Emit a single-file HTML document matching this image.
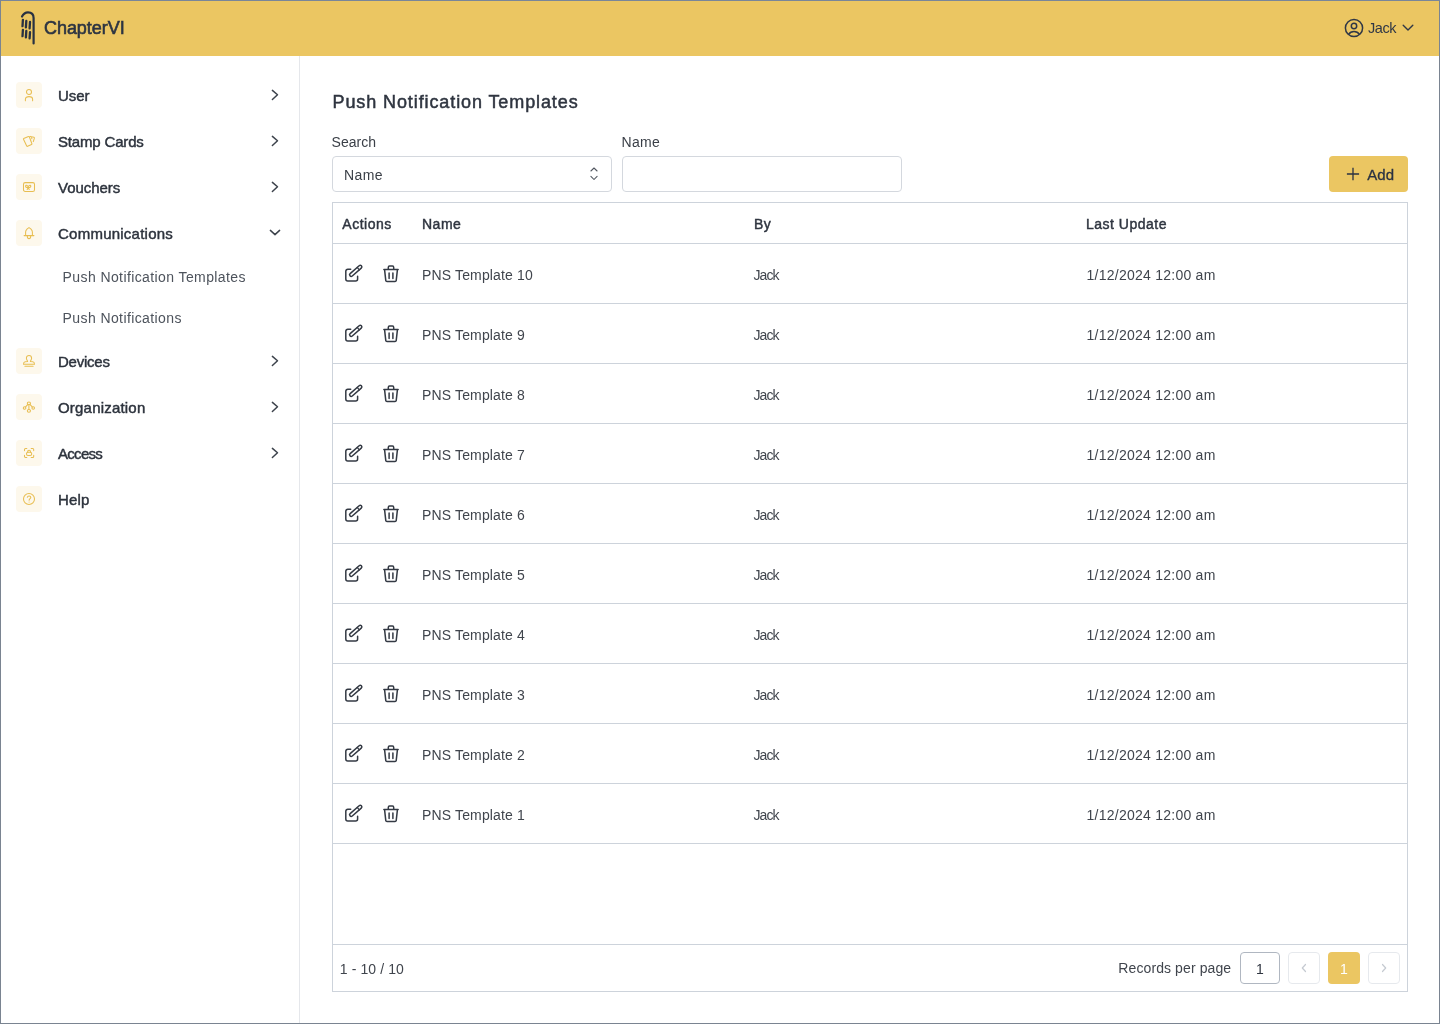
<!DOCTYPE html><html><head><meta charset="utf-8"><title>ChapterVI</title><style>
*{margin:0;padding:0;box-sizing:border-box}
html,body{width:1440px;height:1024px;overflow:hidden;background:#fff;font-family:"Liberation Sans",sans-serif}
#root{position:absolute;left:0;top:0;width:1440px;height:1024px;will-change:transform}
.t{position:absolute;white-space:nowrap}
.abs{position:absolute}
svg{position:absolute;overflow:visible}
</style></head><body><div id="root">
<div class="abs" style="left:0;top:0;width:1440px;height:1024px;border:1px solid #7A8491;border-top-color:#798699;z-index:50;pointer-events:none"></div>
<div class="abs" style="left:0;top:0;width:1440px;height:56px;background:#EBC662"></div>
<svg style="left:0;top:0" width="60" height="56" viewBox="0 0 60 56" fill="none" stroke="#283142" stroke-linecap="round">
<path d="M22 16.5 C23.5 13.5 25.5 12.3 28 12.3 C31.5 12.3 33.6 14.5 33.6 18 L33.6 43.5" stroke-width="2.2"/>
<path d="M22.9 19.8 L22.5 26.2 M22.9 29.8 L22.5 36.2 M26.3 21 L25.9 27.4 M26.3 31 L25.9 37.4 M30.0 22 L29.6 28.4 M30.0 32.2 L29.6 38.4" stroke-width="2.3"/>
</svg>
<div class="t" style="left:44px;top:19.46px;font-size:18px;line-height:18px;font-weight:400;color:#2C3442;letter-spacing:-0.05px;-webkit-text-stroke:0.6px #2C3442;">ChapterVI</div>
<svg style="left:1344px;top:18px" width="20" height="20" viewBox="0 0 20 20" fill="none" stroke="#2F3746" stroke-width="1.5">
<circle cx="10" cy="10" r="8.6"/><circle cx="10" cy="8" r="2.7"/><path d="M4.6 16.3 C5.8 14.4 7.6 13.4 10 13.4 C12.4 13.4 14.2 14.4 15.4 16.3"/>
</svg>
<div class="t" style="left:1368px;top:21.48px;font-size:14.5px;line-height:14.5px;font-weight:400;color:#2F3746;letter-spacing:-0.4px;">Jack</div>
<svg style="left:1400px;top:20px" width="16" height="16" viewBox="0 0 16 16" fill="none" stroke="#2F3746" stroke-width="1.4" stroke-linecap="round" stroke-linejoin="round">
<path d="M3.2 5.2 L8 9.9 L12.8 5.2"/></svg>
<div class="abs" style="left:299px;top:56px;width:1px;height:968px;background:#E5E7EB"></div>
<div class="abs" style="left:16px;top:82px;width:26px;height:26px;border-radius:4px;background:#FDF8EC"></div>
<svg style="left:23px;top:89px" width="12" height="12" viewBox="0 0 12 12" fill="none" stroke="#E8BE52" stroke-width="1.05" stroke-linecap="round" stroke-linejoin="round"><circle cx="6" cy="2.9" r="2.5"/><path d="M2.4 11.8 L2.4 10.2 C2.4 8.5 4 7.6 6 7.6 C8 7.6 9.6 8.5 9.6 10.2 L9.6 11.8"/></svg>
<div class="t" style="left:58px;top:87.90px;font-size:15px;line-height:15px;font-weight:400;color:#2D333D;letter-spacing:-0.07px;-webkit-text-stroke:0.45px #2D333D;">User</div>
<svg style="left:267px;top:87px" width="16" height="16" viewBox="0 0 16 16" fill="none" stroke="#3D434C" stroke-width="1.5" stroke-linecap="round" stroke-linejoin="round"><path d="M5.4 3.4 L10.5 7.8 L5.4 12.5"/></svg>
<div class="abs" style="left:16px;top:128px;width:26px;height:26px;border-radius:4px;background:#FDF8EC"></div>
<svg style="left:23px;top:135px" width="12" height="12" viewBox="0 0 12 12" fill="none" stroke="#E8BE52" stroke-width="1.05" stroke-linecap="round" stroke-linejoin="round"><path d="M0.7 3.6 L5.5 1.6 C5.9 1.4 6.3 1.6 6.4 2 L8.9 8.7 C9 9.1 8.9 9.5 8.5 9.6 L4.6 11.3 C4.2 11.5 3.8 11.3 3.7 10.9 L0.5 4.3 C0.3 4 0.4 3.7 0.7 3.6 Z"/><path d="M7.2 1.4 L10.9 2.3 C11.3 2.4 11.5 2.8 11.4 3.2 L10.3 6.6"/><path d="M8.6 2.6 L8.9 3.8"/></svg>
<div class="t" style="left:58px;top:133.90px;font-size:15px;line-height:15px;font-weight:400;color:#2D333D;letter-spacing:-0.17px;-webkit-text-stroke:0.45px #2D333D;">Stamp Cards</div>
<svg style="left:267px;top:133px" width="16" height="16" viewBox="0 0 16 16" fill="none" stroke="#3D434C" stroke-width="1.5" stroke-linecap="round" stroke-linejoin="round"><path d="M5.4 3.4 L10.5 7.8 L5.4 12.5"/></svg>
<div class="abs" style="left:16px;top:174px;width:26px;height:26px;border-radius:4px;background:#FDF8EC"></div>
<svg style="left:23px;top:181px" width="12" height="12" viewBox="0 0 12 12" fill="none" stroke="#E8BE52" stroke-width="1.05" stroke-linecap="round" stroke-linejoin="round"><path d="M2.2 1.6 L9.8 1.6 C10.9 1.6 11.5 2.3 11.5 3.3 L11.5 8.7 C11.5 9.8 10.9 10.4 9.8 10.4 L2.2 10.4 C1.1 10.4 0.5 9.8 0.5 8.7 L0.5 3.3 C0.5 2.3 1.1 1.6 2.2 1.6 Z"/><path d="M2.6 5.2 C2.6 4.3 3.6 4 4.2 4.6 L5.2 5.6 L6.2 4.6 C6.8 4 7.8 4.3 7.8 5.2 C7.8 6.1 6.6 6.6 5.2 6.6 C3.8 6.6 2.6 6.1 2.6 5.2 Z M4.2 8.5 L5.2 6.6 L6.2 8.5" stroke-width="1.1"/></svg>
<div class="t" style="left:58px;top:179.90px;font-size:15px;line-height:15px;font-weight:400;color:#2D333D;letter-spacing:-0.03px;-webkit-text-stroke:0.45px #2D333D;">Vouchers</div>
<svg style="left:267px;top:179px" width="16" height="16" viewBox="0 0 16 16" fill="none" stroke="#3D434C" stroke-width="1.5" stroke-linecap="round" stroke-linejoin="round"><path d="M5.4 3.4 L10.5 7.8 L5.4 12.5"/></svg>
<div class="abs" style="left:16px;top:220px;width:26px;height:26px;border-radius:4px;background:#FDF8EC"></div>
<svg style="left:23px;top:227px" width="12" height="12" viewBox="0 0 12 12" fill="none" stroke="#E8BE52" stroke-width="1.05" stroke-linecap="round" stroke-linejoin="round"><path d="M2.6 8.4 L2.6 5 C2.6 3.6 3.3 2.8 4.2 1.9 L6 0.6 L7.8 1.9 C8.7 2.8 9.4 3.6 9.4 5 L9.4 8.4"/><path d="M1.1 8.6 L10.9 8.6"/><path d="M4.3 8.9 C4.3 10.7 5 11.6 6 11.6 C7 11.6 7.7 10.7 7.7 8.9"/></svg>
<div class="t" style="left:58px;top:225.90px;font-size:15px;line-height:15px;font-weight:400;color:#2D333D;letter-spacing:0.24px;-webkit-text-stroke:0.45px #2D333D;">Communications</div>
<svg style="left:267px;top:225px" width="16" height="16" viewBox="0 0 16 16" fill="none" stroke="#3D434C" stroke-width="1.5" stroke-linecap="round" stroke-linejoin="round"><path d="M3.4 5.4 L8 9.6 L12.6 5.4"/></svg>
<div class="abs" style="left:16px;top:348px;width:26px;height:26px;border-radius:4px;background:#FDF8EC"></div>
<svg style="left:23px;top:355px" width="12" height="12" viewBox="0 0 12 12" fill="none" stroke="#E8BE52" stroke-width="1.05" stroke-linecap="round" stroke-linejoin="round"><path d="M4.6 6.5 C4.5 5.4 3.4 4.9 3.4 3.3 C3.4 1.6 4.6 0.4 6 0.4 C7.4 0.4 8.6 1.6 8.6 3.3 C8.6 4.9 7.5 5.4 7.4 6.5 L9.9 6.7 C11.1 6.9 11.5 7.9 11.5 9.3 L0.5 9.3 C0.5 7.9 0.9 6.9 2.1 6.7 Z"/><path d="M1.9 11.2 L10.1 11.2"/></svg>
<div class="t" style="left:58px;top:353.90px;font-size:15px;line-height:15px;font-weight:400;color:#2D333D;letter-spacing:-0.23px;-webkit-text-stroke:0.45px #2D333D;">Devices</div>
<svg style="left:267px;top:353px" width="16" height="16" viewBox="0 0 16 16" fill="none" stroke="#3D434C" stroke-width="1.5" stroke-linecap="round" stroke-linejoin="round"><path d="M5.4 3.4 L10.5 7.8 L5.4 12.5"/></svg>
<div class="abs" style="left:16px;top:394px;width:26px;height:26px;border-radius:4px;background:#FDF8EC"></div>
<svg style="left:23px;top:401px" width="12" height="12" viewBox="0 0 12 12" fill="none" stroke="#E8BE52" stroke-width="1.05" stroke-linecap="round" stroke-linejoin="round"><ellipse cx="5.9" cy="2.3" rx="1.6" ry="1.4"/><ellipse cx="1.6" cy="7" rx="1.3" ry="1.3"/><ellipse cx="10.2" cy="7" rx="1.3" ry="1.3"/><ellipse cx="5.9" cy="9.8" rx="1.6" ry="1.4"/><path d="M4.9 3.4 L2.6 5.9 M6.9 3.4 L9.2 5.9 M5.9 3.7 L5.9 8.4"/></svg>
<div class="t" style="left:58px;top:399.90px;font-size:15px;line-height:15px;font-weight:400;color:#2D333D;letter-spacing:0.2px;-webkit-text-stroke:0.45px #2D333D;">Organization</div>
<svg style="left:267px;top:399px" width="16" height="16" viewBox="0 0 16 16" fill="none" stroke="#3D434C" stroke-width="1.5" stroke-linecap="round" stroke-linejoin="round"><path d="M5.4 3.4 L10.5 7.8 L5.4 12.5"/></svg>
<div class="abs" style="left:16px;top:440px;width:26px;height:26px;border-radius:4px;background:#FDF8EC"></div>
<svg style="left:23px;top:447px" width="12" height="12" viewBox="0 0 12 12" fill="none" stroke="#E8BE52" stroke-width="1.05" stroke-linecap="round" stroke-linejoin="round"><path d="M1.5 3.6 L1.5 2.5 C1.5 1.9 1.9 1.5 2.5 1.5 L3.8 1.5 M8.2 1.5 L9.7 1.5 C10.3 1.5 10.7 1.9 10.7 2.5 L10.7 3.6 M10.7 8.3 L10.7 9.4 C10.7 10 10.3 10.4 9.7 10.4 L8.2 10.4 M3.8 10.4 L2.5 10.4 C1.9 10.4 1.5 10 1.5 9.4 L1.5 8.3"/><rect x="3.5" y="5.3" width="5.2" height="3.1" rx="1.5"/><path d="M4.7 5.3 L4.7 4.6 C4.7 3.7 5.3 3.2 6.1 3.2 C6.9 3.2 7.5 3.7 7.5 4.6 L7.5 5.3"/></svg>
<div class="t" style="left:58px;top:445.90px;font-size:15px;line-height:15px;font-weight:400;color:#2D333D;letter-spacing:-0.7px;-webkit-text-stroke:0.45px #2D333D;">Access</div>
<svg style="left:267px;top:445px" width="16" height="16" viewBox="0 0 16 16" fill="none" stroke="#3D434C" stroke-width="1.5" stroke-linecap="round" stroke-linejoin="round"><path d="M5.4 3.4 L10.5 7.8 L5.4 12.5"/></svg>
<div class="abs" style="left:16px;top:486px;width:26px;height:26px;border-radius:4px;background:#FDF8EC"></div>
<svg style="left:23px;top:493px" width="12" height="12" viewBox="0 0 12 12" fill="none" stroke="#E8BE52" stroke-width="1.05" stroke-linecap="round" stroke-linejoin="round"><circle cx="6" cy="6" r="5.5"/><path d="M4.3 4.3 C4.5 3.3 5.2 2.9 6.1 2.9 C7.1 2.9 7.8 3.6 7.8 4.4 C7.8 5.6 6.1 5.7 6.1 7.3"/><path d="M6.1 8.9 L6.1 9"/></svg>
<div class="t" style="left:58px;top:491.90px;font-size:15px;line-height:15px;font-weight:400;color:#2D333D;letter-spacing:0.2px;-webkit-text-stroke:0.45px #2D333D;">Help</div>
<div class="t" style="left:62.6px;top:270.05px;font-size:14px;line-height:14px;font-weight:400;color:#4D535C;letter-spacing:0.4px;">Push Notification Templates</div>
<div class="t" style="left:62.6px;top:310.95px;font-size:14px;line-height:14px;font-weight:400;color:#4D535C;letter-spacing:0.4px;">Push Notifications</div>
<div class="t" style="left:332.5px;top:92.86px;font-size:18px;line-height:18px;font-weight:400;color:#2F3540;letter-spacing:0.9px;-webkit-text-stroke:0.5px #2F3540;">Push Notification Templates</div>
<div class="t" style="left:331.6px;top:134.75px;font-size:14px;line-height:14px;font-weight:400;color:#3A3F47;letter-spacing:0px;">Search</div>
<div class="t" style="left:621.6px;top:134.75px;font-size:14px;line-height:14px;font-weight:400;color:#3A3F47;letter-spacing:0.3px;">Name</div>
<div class="abs" style="left:332px;top:156px;width:280px;height:36px;border:1px solid #D4D8DE;border-radius:4px"></div>
<div class="t" style="left:344px;top:167.55px;font-size:14px;line-height:14px;font-weight:400;color:#3A3F47;letter-spacing:0.4px;">Name</div>
<svg style="left:586px;top:166px" width="16" height="16" viewBox="0 0 16 16" fill="none" stroke="#50565F" stroke-width="1.05" stroke-linecap="round" stroke-linejoin="round"><path d="M4.9 5 L8 2 L11.1 5 M4.9 10.3 L8 13.5 L11.1 10.3"/></svg>
<div class="abs" style="left:622px;top:156px;width:280px;height:36px;border:1px solid #D4D8DE;border-radius:4px"></div>
<div class="abs" style="left:1329px;top:156px;width:79px;height:36px;background:#EBC662;border-radius:4px"></div>
<svg style="left:1345px;top:166px" width="16" height="16" viewBox="0 0 16 16" fill="none" stroke="#2A3242" stroke-width="1.3"><path d="M8 1.8 L8 14.2 M1.9 8 L14.1 8"/></svg>
<div class="t" style="left:1367.2px;top:166.60px;font-size:15px;line-height:15px;font-weight:400;color:#2A3242;letter-spacing:0.1px;-webkit-text-stroke:0.3px #2A3242;">Add</div>
<div class="abs" style="left:332px;top:202px;width:1076px;height:790px;border:1px solid #CDD3DB"></div>
<div class="abs" style="left:333px;top:243px;width:1074px;height:1px;background:#CDD3DB"></div>
<div class="t" style="left:342.3px;top:216.75px;font-size:14px;line-height:14px;font-weight:400;color:#2F3540;letter-spacing:0.5px;-webkit-text-stroke:0.45px #2F3540;">Actions</div>
<div class="t" style="left:422px;top:216.75px;font-size:14px;line-height:14px;font-weight:400;color:#2F3540;letter-spacing:0.5px;-webkit-text-stroke:0.45px #2F3540;">Name</div>
<div class="t" style="left:754px;top:216.75px;font-size:14px;line-height:14px;font-weight:400;color:#2F3540;letter-spacing:0.5px;-webkit-text-stroke:0.45px #2F3540;">By</div>
<div class="t" style="left:1086px;top:216.75px;font-size:14px;line-height:14px;font-weight:400;color:#2F3540;letter-spacing:0.5px;-webkit-text-stroke:0.45px #2F3540;">Last Update</div>
<svg style="left:343px;top:264px" width="20" height="20" viewBox="0 0 20 20" fill="none" stroke="#343A44" stroke-width="1.5" stroke-linecap="round" stroke-linejoin="round"><path d="M7.7 5.3 L4.8 5.3 C3.6 5.3 2.8 6.1 2.8 7.3 L2.8 15.1 C2.8 16.3 3.6 17.1 4.8 17.1 L12.6 17.1 C13.8 17.1 14.6 16.3 14.6 15.1 L14.6 12.2"/><path d="M9.26 12.0 L18.26 4.1 A1.6 1.6 0 0 0 16.14 1.7 L7.14 9.6 A1.6 1.6 0 0 0 9.26 12.0 Z"/><path d="M16.31 5.82 L14.19 3.42" stroke-width="1.3"/></svg>
<svg style="left:381px;top:264px" width="20" height="20" viewBox="0 0 20 20" fill="none" stroke="#343A44" stroke-width="1.5" stroke-linecap="round" stroke-linejoin="round"><path d="M2.9 5.4 L17.1 5.4"/><path d="M7.3 5.2 L7.3 3.4 C7.3 2.5 7.8 2.1 8.5 2.1 L11.5 2.1 C12.2 2.1 12.7 2.5 12.7 3.4 L12.7 5.2"/><path d="M3.6 5.8 L4.8 16.6 C4.9 17.2 5.4 17.4 6 17.4 L14 17.4 C14.6 17.4 15.1 17.2 15.2 16.6 L16.4 5.8"/><path d="M8.1 8.9 L8.1 14.4 M11.9 8.9 L11.9 14.4"/></svg>
<div class="t" style="left:422px;top:267.65px;font-size:14px;line-height:14px;font-weight:400;color:#40454D;letter-spacing:0.15px;">PNS Template 10</div>
<div class="t" style="left:753.4px;top:267.65px;font-size:14px;line-height:14px;font-weight:400;color:#40454D;letter-spacing:-0.9px;">Jack</div>
<div class="t" style="left:1086.5px;top:267.65px;font-size:14px;line-height:14px;font-weight:400;color:#40454D;letter-spacing:0.25px;">1/12/2024 12:00 am</div>
<div class="abs" style="left:333px;top:303px;width:1074px;height:1px;background:#CDD3DB"></div>
<svg style="left:343px;top:324px" width="20" height="20" viewBox="0 0 20 20" fill="none" stroke="#343A44" stroke-width="1.5" stroke-linecap="round" stroke-linejoin="round"><path d="M7.7 5.3 L4.8 5.3 C3.6 5.3 2.8 6.1 2.8 7.3 L2.8 15.1 C2.8 16.3 3.6 17.1 4.8 17.1 L12.6 17.1 C13.8 17.1 14.6 16.3 14.6 15.1 L14.6 12.2"/><path d="M9.26 12.0 L18.26 4.1 A1.6 1.6 0 0 0 16.14 1.7 L7.14 9.6 A1.6 1.6 0 0 0 9.26 12.0 Z"/><path d="M16.31 5.82 L14.19 3.42" stroke-width="1.3"/></svg>
<svg style="left:381px;top:324px" width="20" height="20" viewBox="0 0 20 20" fill="none" stroke="#343A44" stroke-width="1.5" stroke-linecap="round" stroke-linejoin="round"><path d="M2.9 5.4 L17.1 5.4"/><path d="M7.3 5.2 L7.3 3.4 C7.3 2.5 7.8 2.1 8.5 2.1 L11.5 2.1 C12.2 2.1 12.7 2.5 12.7 3.4 L12.7 5.2"/><path d="M3.6 5.8 L4.8 16.6 C4.9 17.2 5.4 17.4 6 17.4 L14 17.4 C14.6 17.4 15.1 17.2 15.2 16.6 L16.4 5.8"/><path d="M8.1 8.9 L8.1 14.4 M11.9 8.9 L11.9 14.4"/></svg>
<div class="t" style="left:422px;top:327.65px;font-size:14px;line-height:14px;font-weight:400;color:#40454D;letter-spacing:0.15px;">PNS Template 9</div>
<div class="t" style="left:753.4px;top:327.65px;font-size:14px;line-height:14px;font-weight:400;color:#40454D;letter-spacing:-0.9px;">Jack</div>
<div class="t" style="left:1086.5px;top:327.65px;font-size:14px;line-height:14px;font-weight:400;color:#40454D;letter-spacing:0.25px;">1/12/2024 12:00 am</div>
<div class="abs" style="left:333px;top:363px;width:1074px;height:1px;background:#CDD3DB"></div>
<svg style="left:343px;top:384px" width="20" height="20" viewBox="0 0 20 20" fill="none" stroke="#343A44" stroke-width="1.5" stroke-linecap="round" stroke-linejoin="round"><path d="M7.7 5.3 L4.8 5.3 C3.6 5.3 2.8 6.1 2.8 7.3 L2.8 15.1 C2.8 16.3 3.6 17.1 4.8 17.1 L12.6 17.1 C13.8 17.1 14.6 16.3 14.6 15.1 L14.6 12.2"/><path d="M9.26 12.0 L18.26 4.1 A1.6 1.6 0 0 0 16.14 1.7 L7.14 9.6 A1.6 1.6 0 0 0 9.26 12.0 Z"/><path d="M16.31 5.82 L14.19 3.42" stroke-width="1.3"/></svg>
<svg style="left:381px;top:384px" width="20" height="20" viewBox="0 0 20 20" fill="none" stroke="#343A44" stroke-width="1.5" stroke-linecap="round" stroke-linejoin="round"><path d="M2.9 5.4 L17.1 5.4"/><path d="M7.3 5.2 L7.3 3.4 C7.3 2.5 7.8 2.1 8.5 2.1 L11.5 2.1 C12.2 2.1 12.7 2.5 12.7 3.4 L12.7 5.2"/><path d="M3.6 5.8 L4.8 16.6 C4.9 17.2 5.4 17.4 6 17.4 L14 17.4 C14.6 17.4 15.1 17.2 15.2 16.6 L16.4 5.8"/><path d="M8.1 8.9 L8.1 14.4 M11.9 8.9 L11.9 14.4"/></svg>
<div class="t" style="left:422px;top:387.65px;font-size:14px;line-height:14px;font-weight:400;color:#40454D;letter-spacing:0.15px;">PNS Template 8</div>
<div class="t" style="left:753.4px;top:387.65px;font-size:14px;line-height:14px;font-weight:400;color:#40454D;letter-spacing:-0.9px;">Jack</div>
<div class="t" style="left:1086.5px;top:387.65px;font-size:14px;line-height:14px;font-weight:400;color:#40454D;letter-spacing:0.25px;">1/12/2024 12:00 am</div>
<div class="abs" style="left:333px;top:423px;width:1074px;height:1px;background:#CDD3DB"></div>
<svg style="left:343px;top:444px" width="20" height="20" viewBox="0 0 20 20" fill="none" stroke="#343A44" stroke-width="1.5" stroke-linecap="round" stroke-linejoin="round"><path d="M7.7 5.3 L4.8 5.3 C3.6 5.3 2.8 6.1 2.8 7.3 L2.8 15.1 C2.8 16.3 3.6 17.1 4.8 17.1 L12.6 17.1 C13.8 17.1 14.6 16.3 14.6 15.1 L14.6 12.2"/><path d="M9.26 12.0 L18.26 4.1 A1.6 1.6 0 0 0 16.14 1.7 L7.14 9.6 A1.6 1.6 0 0 0 9.26 12.0 Z"/><path d="M16.31 5.82 L14.19 3.42" stroke-width="1.3"/></svg>
<svg style="left:381px;top:444px" width="20" height="20" viewBox="0 0 20 20" fill="none" stroke="#343A44" stroke-width="1.5" stroke-linecap="round" stroke-linejoin="round"><path d="M2.9 5.4 L17.1 5.4"/><path d="M7.3 5.2 L7.3 3.4 C7.3 2.5 7.8 2.1 8.5 2.1 L11.5 2.1 C12.2 2.1 12.7 2.5 12.7 3.4 L12.7 5.2"/><path d="M3.6 5.8 L4.8 16.6 C4.9 17.2 5.4 17.4 6 17.4 L14 17.4 C14.6 17.4 15.1 17.2 15.2 16.6 L16.4 5.8"/><path d="M8.1 8.9 L8.1 14.4 M11.9 8.9 L11.9 14.4"/></svg>
<div class="t" style="left:422px;top:447.65px;font-size:14px;line-height:14px;font-weight:400;color:#40454D;letter-spacing:0.15px;">PNS Template 7</div>
<div class="t" style="left:753.4px;top:447.65px;font-size:14px;line-height:14px;font-weight:400;color:#40454D;letter-spacing:-0.9px;">Jack</div>
<div class="t" style="left:1086.5px;top:447.65px;font-size:14px;line-height:14px;font-weight:400;color:#40454D;letter-spacing:0.25px;">1/12/2024 12:00 am</div>
<div class="abs" style="left:333px;top:483px;width:1074px;height:1px;background:#CDD3DB"></div>
<svg style="left:343px;top:504px" width="20" height="20" viewBox="0 0 20 20" fill="none" stroke="#343A44" stroke-width="1.5" stroke-linecap="round" stroke-linejoin="round"><path d="M7.7 5.3 L4.8 5.3 C3.6 5.3 2.8 6.1 2.8 7.3 L2.8 15.1 C2.8 16.3 3.6 17.1 4.8 17.1 L12.6 17.1 C13.8 17.1 14.6 16.3 14.6 15.1 L14.6 12.2"/><path d="M9.26 12.0 L18.26 4.1 A1.6 1.6 0 0 0 16.14 1.7 L7.14 9.6 A1.6 1.6 0 0 0 9.26 12.0 Z"/><path d="M16.31 5.82 L14.19 3.42" stroke-width="1.3"/></svg>
<svg style="left:381px;top:504px" width="20" height="20" viewBox="0 0 20 20" fill="none" stroke="#343A44" stroke-width="1.5" stroke-linecap="round" stroke-linejoin="round"><path d="M2.9 5.4 L17.1 5.4"/><path d="M7.3 5.2 L7.3 3.4 C7.3 2.5 7.8 2.1 8.5 2.1 L11.5 2.1 C12.2 2.1 12.7 2.5 12.7 3.4 L12.7 5.2"/><path d="M3.6 5.8 L4.8 16.6 C4.9 17.2 5.4 17.4 6 17.4 L14 17.4 C14.6 17.4 15.1 17.2 15.2 16.6 L16.4 5.8"/><path d="M8.1 8.9 L8.1 14.4 M11.9 8.9 L11.9 14.4"/></svg>
<div class="t" style="left:422px;top:507.65px;font-size:14px;line-height:14px;font-weight:400;color:#40454D;letter-spacing:0.15px;">PNS Template 6</div>
<div class="t" style="left:753.4px;top:507.65px;font-size:14px;line-height:14px;font-weight:400;color:#40454D;letter-spacing:-0.9px;">Jack</div>
<div class="t" style="left:1086.5px;top:507.65px;font-size:14px;line-height:14px;font-weight:400;color:#40454D;letter-spacing:0.25px;">1/12/2024 12:00 am</div>
<div class="abs" style="left:333px;top:543px;width:1074px;height:1px;background:#CDD3DB"></div>
<svg style="left:343px;top:564px" width="20" height="20" viewBox="0 0 20 20" fill="none" stroke="#343A44" stroke-width="1.5" stroke-linecap="round" stroke-linejoin="round"><path d="M7.7 5.3 L4.8 5.3 C3.6 5.3 2.8 6.1 2.8 7.3 L2.8 15.1 C2.8 16.3 3.6 17.1 4.8 17.1 L12.6 17.1 C13.8 17.1 14.6 16.3 14.6 15.1 L14.6 12.2"/><path d="M9.26 12.0 L18.26 4.1 A1.6 1.6 0 0 0 16.14 1.7 L7.14 9.6 A1.6 1.6 0 0 0 9.26 12.0 Z"/><path d="M16.31 5.82 L14.19 3.42" stroke-width="1.3"/></svg>
<svg style="left:381px;top:564px" width="20" height="20" viewBox="0 0 20 20" fill="none" stroke="#343A44" stroke-width="1.5" stroke-linecap="round" stroke-linejoin="round"><path d="M2.9 5.4 L17.1 5.4"/><path d="M7.3 5.2 L7.3 3.4 C7.3 2.5 7.8 2.1 8.5 2.1 L11.5 2.1 C12.2 2.1 12.7 2.5 12.7 3.4 L12.7 5.2"/><path d="M3.6 5.8 L4.8 16.6 C4.9 17.2 5.4 17.4 6 17.4 L14 17.4 C14.6 17.4 15.1 17.2 15.2 16.6 L16.4 5.8"/><path d="M8.1 8.9 L8.1 14.4 M11.9 8.9 L11.9 14.4"/></svg>
<div class="t" style="left:422px;top:567.65px;font-size:14px;line-height:14px;font-weight:400;color:#40454D;letter-spacing:0.15px;">PNS Template 5</div>
<div class="t" style="left:753.4px;top:567.65px;font-size:14px;line-height:14px;font-weight:400;color:#40454D;letter-spacing:-0.9px;">Jack</div>
<div class="t" style="left:1086.5px;top:567.65px;font-size:14px;line-height:14px;font-weight:400;color:#40454D;letter-spacing:0.25px;">1/12/2024 12:00 am</div>
<div class="abs" style="left:333px;top:603px;width:1074px;height:1px;background:#CDD3DB"></div>
<svg style="left:343px;top:624px" width="20" height="20" viewBox="0 0 20 20" fill="none" stroke="#343A44" stroke-width="1.5" stroke-linecap="round" stroke-linejoin="round"><path d="M7.7 5.3 L4.8 5.3 C3.6 5.3 2.8 6.1 2.8 7.3 L2.8 15.1 C2.8 16.3 3.6 17.1 4.8 17.1 L12.6 17.1 C13.8 17.1 14.6 16.3 14.6 15.1 L14.6 12.2"/><path d="M9.26 12.0 L18.26 4.1 A1.6 1.6 0 0 0 16.14 1.7 L7.14 9.6 A1.6 1.6 0 0 0 9.26 12.0 Z"/><path d="M16.31 5.82 L14.19 3.42" stroke-width="1.3"/></svg>
<svg style="left:381px;top:624px" width="20" height="20" viewBox="0 0 20 20" fill="none" stroke="#343A44" stroke-width="1.5" stroke-linecap="round" stroke-linejoin="round"><path d="M2.9 5.4 L17.1 5.4"/><path d="M7.3 5.2 L7.3 3.4 C7.3 2.5 7.8 2.1 8.5 2.1 L11.5 2.1 C12.2 2.1 12.7 2.5 12.7 3.4 L12.7 5.2"/><path d="M3.6 5.8 L4.8 16.6 C4.9 17.2 5.4 17.4 6 17.4 L14 17.4 C14.6 17.4 15.1 17.2 15.2 16.6 L16.4 5.8"/><path d="M8.1 8.9 L8.1 14.4 M11.9 8.9 L11.9 14.4"/></svg>
<div class="t" style="left:422px;top:627.65px;font-size:14px;line-height:14px;font-weight:400;color:#40454D;letter-spacing:0.15px;">PNS Template 4</div>
<div class="t" style="left:753.4px;top:627.65px;font-size:14px;line-height:14px;font-weight:400;color:#40454D;letter-spacing:-0.9px;">Jack</div>
<div class="t" style="left:1086.5px;top:627.65px;font-size:14px;line-height:14px;font-weight:400;color:#40454D;letter-spacing:0.25px;">1/12/2024 12:00 am</div>
<div class="abs" style="left:333px;top:663px;width:1074px;height:1px;background:#CDD3DB"></div>
<svg style="left:343px;top:684px" width="20" height="20" viewBox="0 0 20 20" fill="none" stroke="#343A44" stroke-width="1.5" stroke-linecap="round" stroke-linejoin="round"><path d="M7.7 5.3 L4.8 5.3 C3.6 5.3 2.8 6.1 2.8 7.3 L2.8 15.1 C2.8 16.3 3.6 17.1 4.8 17.1 L12.6 17.1 C13.8 17.1 14.6 16.3 14.6 15.1 L14.6 12.2"/><path d="M9.26 12.0 L18.26 4.1 A1.6 1.6 0 0 0 16.14 1.7 L7.14 9.6 A1.6 1.6 0 0 0 9.26 12.0 Z"/><path d="M16.31 5.82 L14.19 3.42" stroke-width="1.3"/></svg>
<svg style="left:381px;top:684px" width="20" height="20" viewBox="0 0 20 20" fill="none" stroke="#343A44" stroke-width="1.5" stroke-linecap="round" stroke-linejoin="round"><path d="M2.9 5.4 L17.1 5.4"/><path d="M7.3 5.2 L7.3 3.4 C7.3 2.5 7.8 2.1 8.5 2.1 L11.5 2.1 C12.2 2.1 12.7 2.5 12.7 3.4 L12.7 5.2"/><path d="M3.6 5.8 L4.8 16.6 C4.9 17.2 5.4 17.4 6 17.4 L14 17.4 C14.6 17.4 15.1 17.2 15.2 16.6 L16.4 5.8"/><path d="M8.1 8.9 L8.1 14.4 M11.9 8.9 L11.9 14.4"/></svg>
<div class="t" style="left:422px;top:687.65px;font-size:14px;line-height:14px;font-weight:400;color:#40454D;letter-spacing:0.15px;">PNS Template 3</div>
<div class="t" style="left:753.4px;top:687.65px;font-size:14px;line-height:14px;font-weight:400;color:#40454D;letter-spacing:-0.9px;">Jack</div>
<div class="t" style="left:1086.5px;top:687.65px;font-size:14px;line-height:14px;font-weight:400;color:#40454D;letter-spacing:0.25px;">1/12/2024 12:00 am</div>
<div class="abs" style="left:333px;top:723px;width:1074px;height:1px;background:#CDD3DB"></div>
<svg style="left:343px;top:744px" width="20" height="20" viewBox="0 0 20 20" fill="none" stroke="#343A44" stroke-width="1.5" stroke-linecap="round" stroke-linejoin="round"><path d="M7.7 5.3 L4.8 5.3 C3.6 5.3 2.8 6.1 2.8 7.3 L2.8 15.1 C2.8 16.3 3.6 17.1 4.8 17.1 L12.6 17.1 C13.8 17.1 14.6 16.3 14.6 15.1 L14.6 12.2"/><path d="M9.26 12.0 L18.26 4.1 A1.6 1.6 0 0 0 16.14 1.7 L7.14 9.6 A1.6 1.6 0 0 0 9.26 12.0 Z"/><path d="M16.31 5.82 L14.19 3.42" stroke-width="1.3"/></svg>
<svg style="left:381px;top:744px" width="20" height="20" viewBox="0 0 20 20" fill="none" stroke="#343A44" stroke-width="1.5" stroke-linecap="round" stroke-linejoin="round"><path d="M2.9 5.4 L17.1 5.4"/><path d="M7.3 5.2 L7.3 3.4 C7.3 2.5 7.8 2.1 8.5 2.1 L11.5 2.1 C12.2 2.1 12.7 2.5 12.7 3.4 L12.7 5.2"/><path d="M3.6 5.8 L4.8 16.6 C4.9 17.2 5.4 17.4 6 17.4 L14 17.4 C14.6 17.4 15.1 17.2 15.2 16.6 L16.4 5.8"/><path d="M8.1 8.9 L8.1 14.4 M11.9 8.9 L11.9 14.4"/></svg>
<div class="t" style="left:422px;top:747.65px;font-size:14px;line-height:14px;font-weight:400;color:#40454D;letter-spacing:0.15px;">PNS Template 2</div>
<div class="t" style="left:753.4px;top:747.65px;font-size:14px;line-height:14px;font-weight:400;color:#40454D;letter-spacing:-0.9px;">Jack</div>
<div class="t" style="left:1086.5px;top:747.65px;font-size:14px;line-height:14px;font-weight:400;color:#40454D;letter-spacing:0.25px;">1/12/2024 12:00 am</div>
<div class="abs" style="left:333px;top:783px;width:1074px;height:1px;background:#CDD3DB"></div>
<svg style="left:343px;top:804px" width="20" height="20" viewBox="0 0 20 20" fill="none" stroke="#343A44" stroke-width="1.5" stroke-linecap="round" stroke-linejoin="round"><path d="M7.7 5.3 L4.8 5.3 C3.6 5.3 2.8 6.1 2.8 7.3 L2.8 15.1 C2.8 16.3 3.6 17.1 4.8 17.1 L12.6 17.1 C13.8 17.1 14.6 16.3 14.6 15.1 L14.6 12.2"/><path d="M9.26 12.0 L18.26 4.1 A1.6 1.6 0 0 0 16.14 1.7 L7.14 9.6 A1.6 1.6 0 0 0 9.26 12.0 Z"/><path d="M16.31 5.82 L14.19 3.42" stroke-width="1.3"/></svg>
<svg style="left:381px;top:804px" width="20" height="20" viewBox="0 0 20 20" fill="none" stroke="#343A44" stroke-width="1.5" stroke-linecap="round" stroke-linejoin="round"><path d="M2.9 5.4 L17.1 5.4"/><path d="M7.3 5.2 L7.3 3.4 C7.3 2.5 7.8 2.1 8.5 2.1 L11.5 2.1 C12.2 2.1 12.7 2.5 12.7 3.4 L12.7 5.2"/><path d="M3.6 5.8 L4.8 16.6 C4.9 17.2 5.4 17.4 6 17.4 L14 17.4 C14.6 17.4 15.1 17.2 15.2 16.6 L16.4 5.8"/><path d="M8.1 8.9 L8.1 14.4 M11.9 8.9 L11.9 14.4"/></svg>
<div class="t" style="left:422px;top:807.65px;font-size:14px;line-height:14px;font-weight:400;color:#40454D;letter-spacing:0.15px;">PNS Template 1</div>
<div class="t" style="left:753.4px;top:807.65px;font-size:14px;line-height:14px;font-weight:400;color:#40454D;letter-spacing:-0.9px;">Jack</div>
<div class="t" style="left:1086.5px;top:807.65px;font-size:14px;line-height:14px;font-weight:400;color:#40454D;letter-spacing:0.25px;">1/12/2024 12:00 am</div>
<div class="abs" style="left:333px;top:843px;width:1074px;height:1px;background:#CDD3DB"></div>
<div class="abs" style="left:333px;top:944px;width:1074px;height:1px;background:#CDD3DB"></div>
<div class="t" style="left:339.8px;top:961.85px;font-size:14px;line-height:14px;font-weight:400;color:#40454D;letter-spacing:0.1px;">1 - 10 / 10</div>
<div class="t" style="left:1118.3px;top:961.45px;font-size:14px;line-height:14px;font-weight:400;color:#40454D;letter-spacing:0.1px;">Records per page</div>
<div class="abs" style="left:1240px;top:952px;width:40px;height:32px;border:1px solid #B0B7C1;border-radius:4px"></div>
<div class="t" style="left:1256px;top:961.65px;font-size:14px;line-height:14px;font-weight:400;color:#2F3540;letter-spacing:0px;">1</div>
<div class="abs" style="left:1288px;top:952px;width:32px;height:32px;border:1px solid #E6E9ED;border-radius:4px"></div>
<svg style="left:1296px;top:960px" width="16" height="16" viewBox="0 0 16 16" fill="none" stroke="#C5CAD1" stroke-width="1.2" stroke-linecap="round" stroke-linejoin="round"><path d="M9.5 4.5 L6.3 8 L9.5 11.5"/></svg>
<div class="abs" style="left:1328px;top:952px;width:32px;height:32px;background:#EBC662;border-radius:4px"></div>
<div class="t" style="left:1340px;top:961.65px;font-size:14px;line-height:14px;font-weight:400;color:#FFFFFF;letter-spacing:0px;">1</div>
<div class="abs" style="left:1368px;top:952px;width:32px;height:32px;border:1px solid #E6E9ED;border-radius:4px"></div>
<svg style="left:1376px;top:960px" width="16" height="16" viewBox="0 0 16 16" fill="none" stroke="#C5CAD1" stroke-width="1.2" stroke-linecap="round" stroke-linejoin="round"><path d="M6.5 4.5 L9.7 8 L6.5 11.5"/></svg>
</div></body></html>
